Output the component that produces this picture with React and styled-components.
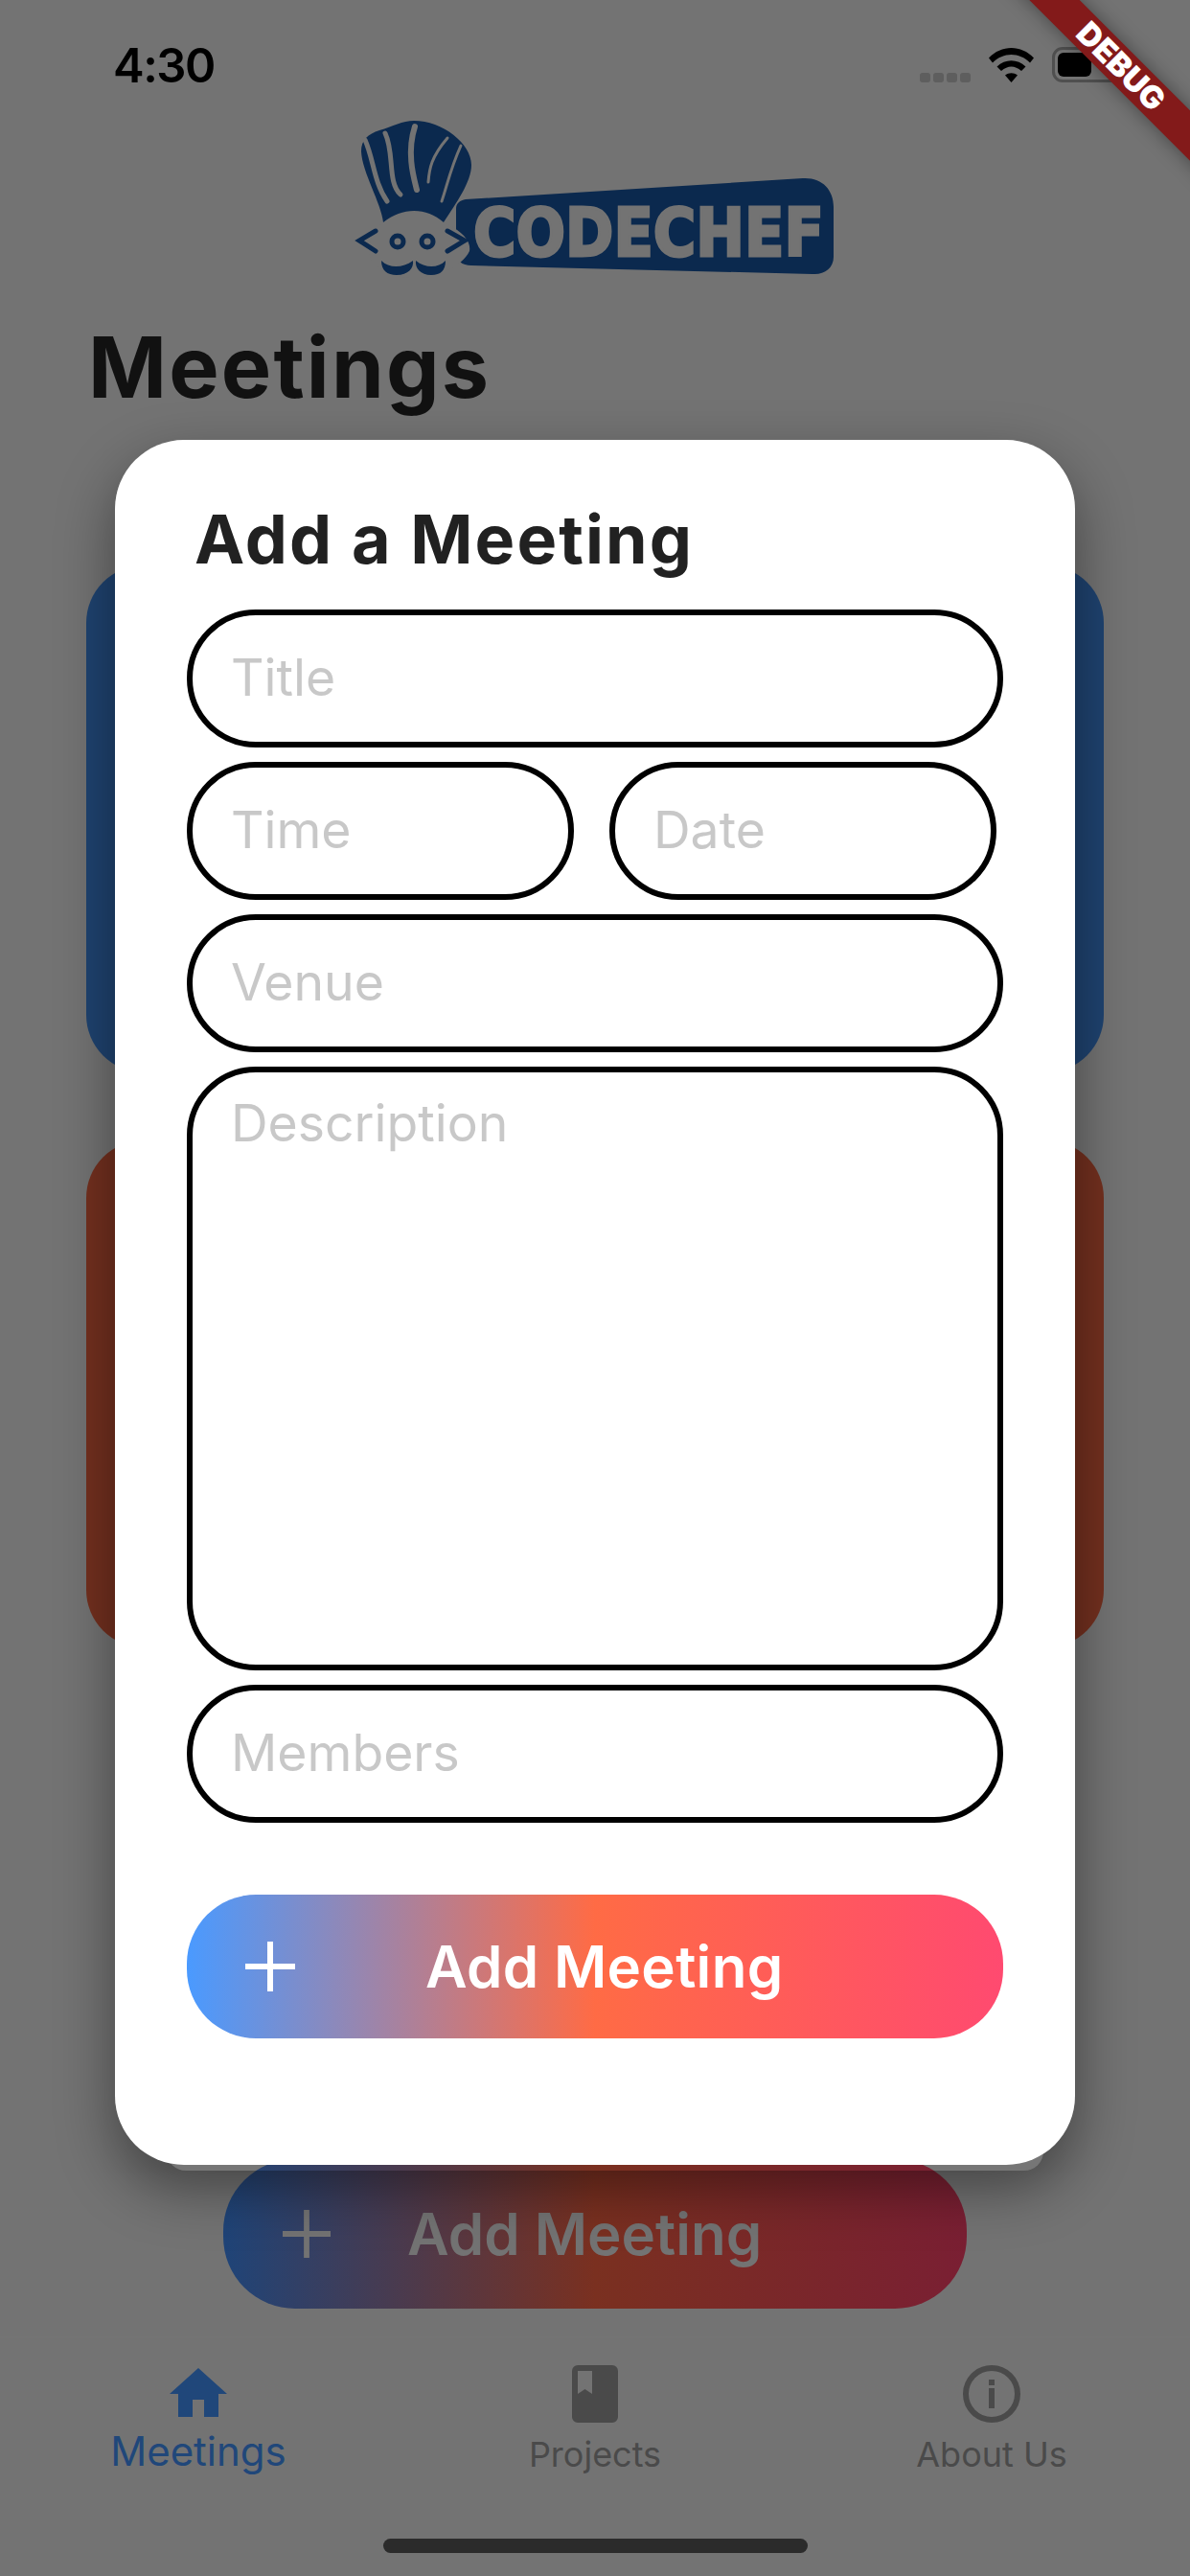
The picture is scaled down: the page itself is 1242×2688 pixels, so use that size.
import React from 'react';
import styled, { createGlobalStyle } from 'styled-components';

const GlobalStyle = createGlobalStyle`
  html, body {
    margin: 0;
    padding: 0;
    background: #737373;
  }
  * {
    box-sizing: border-box;
  }
`;

const FONT = `Inter, "Noto Sans", "Liberation Sans", sans-serif`;
const LOGO_BLUE = '#0b294e';
const BACK_GRADIENT = 'linear-gradient(90deg, #1f4478 0%, #7a3020 50%, #7a1f33 100%)';

const Home = () => (
  <svg width="60" height="51" viewBox="0 0 60 51">
    <path d="M30 0 L60 27 H51 V51 H36 V33 H24 V51 H9 V27 H0 Z" fill="currentColor" />
  </svg>
);

const Book = () => (
  <svg width="48" height="60" viewBox="0 0 48 60">
    <path
      fillRule="evenodd"
      d="M6 0 H42 A6 6 0 0 1 48 6 V54 A6 6 0 0 1 42 60 H6 A6 6 0 0 1 0 54 V6 A6 6 0 0 1 6 0 Z M6 6 V30 L13.500 25 L21 30 V6 Z"
      fill="currentColor"
    />
  </svg>
);

const Info = () => (
  <svg width="60" height="60" viewBox="0 0 60 60">
    <circle cx="30" cy="30" r="27" fill="none" stroke="currentColor" strokeWidth="6" />
    <rect x="27" y="15" width="6" height="6" fill="currentColor" />
    <rect x="27" y="24" width="6" height="21" fill="currentColor" />
  </svg>
);

const Plus = ({ size, color }) => (
  <svg width={size} height={size} viewBox="0 0 52 52">
    <path d="M23 0 H29 V23 H52 V29 H29 V52 H23 V29 H0 V23 H23 Z" fill={color} />
  </svg>
);

const Wifi = () => (
  <svg width="47" height="36" viewBox="0 0 47 36">
    <path d="M0 10.500 C13 -3.500 34 -3.500 47 10.500 L43 15.500 C32 4 15 4 4 15.500 Z" fill="#000" />
    <path d="M8.500 19.500 C17 11 30 11 38.500 19.500 L34 24 C27 18 20 18 13 24 Z" fill="#000" />
    <path d="M17 28.500 C21 25.500 26 25.500 30 28.500 L23.500 36 Z" fill="#000" />
  </svg>
);

// hat, face and banner of the logo; the group is in page pixels, the text in svg pixels
const Logo = () => (
  <svg width="600" height="175" viewBox="0 0 600 175">
    <g transform="translate(-360 -120)">
      <path
        fill={LOGO_BLUE}
        d="M432 126 C462 126 492 150 492 172 C492 190 476 212 463 232 L400 232 C398 212 378 180 377 158 C377 146 384 140 396 136 C410 132 420 126 432 126 Z"
      />
      <g fill="none" stroke="#737373" strokeLinecap="round">
        <path strokeWidth="5" d="M381 146 C390 166 390 190 404 210" />
        <path strokeWidth="5" d="M402 139 C412 160 404 190 418 203" />
        <path strokeWidth="6" d="M433 132 C424 160 432 186 435 198" />
        <path strokeWidth="3" d="M467 144 C450 164 448 176 447 190" />
        <path strokeWidth="3" d="M481 152 C470 176 466 196 461 210" />
      </g>
      <path
        fill={LOGO_BLUE}
        d="M486 208 L838 186 C858 185 870 198 870 216 L870 268 C870 280 860 287 848 286 L492 277 C482 277 476 272 476 262 L476 218 C476 212 480 209 486 208 Z"
      />
    </g>
    <text
      x="134"
      y="147"
      fontFamily="'DejaVu Sans', sans-serif"
      fontWeight="700"
      fontSize="70"
      fill="#737373"
      stroke="#737373"
      strokeWidth="3"
      textLength="366"
      lengthAdjust="spacingAndGlyphs"
    >
      CODECHEF
    </text>
    <g transform="translate(-360 -120)">
      <path
        fill="#737373"
        d="M400 232 C420 216 445 216 463 232 C480 240 492 250 490 262 C482 280 450 290 432 290 C410 290 385 280 385 262 C385 250 390 240 400 232 Z"
      />
      <g fill="none" stroke={LOGO_BLUE} strokeWidth="5" strokeLinecap="round">
        <path d="M392 241 L375 251 L392 262" />
        <path d="M467 241 L485 251 L467 262" />
      </g>
      <circle cx="415" cy="252" r="6" fill="none" stroke={LOGO_BLUE} strokeWidth="5" />
      <circle cx="446" cy="252" r="6" fill="none" stroke={LOGO_BLUE} strokeWidth="5" />
      <path fill={LOGO_BLUE} d="M398 272 C406 280 420 280 431 272 C432 280 426 287 414 287 C404 287 398 282 398 272 Z" />
      <path fill={LOGO_BLUE} d="M465 272 C457 280 444 280 434 272 C433 280 439 287 450 287 C460 287 465 282 465 272 Z" />
    </g>
  </svg>
);

const Page = styled.div`
  position: relative;
  width: 1242px;
  height: 2688px;
  overflow: hidden;
  background: #737373;
  font-family: ${FONT};
  display: flex;
  flex-direction: column;
`;

const StatusBar = styled.div`
  height: 120px;
  padding: 47px 72px 0 118px;
  display: flex;
  justify-content: space-between;
  align-items: flex-start;
`;

const Clock = styled.span`
  font-size: 49px;
  line-height: 44px;
  font-weight: 600;
  letter-spacing: -1.5px;
  color: #000;
`;

const StatusIcons = styled.div`
  display: flex;
  align-items: flex-end;
  gap: 19px;
  padding-top: 2px;
`;

const SignalDots = styled.div`
  display: flex;
  gap: 3px;
`;

const Dot = styled.i`
  display: block;
  width: 11px;
  height: 10px;
  border-radius: 3px;
  background: #5e5e5e;
`;

const Battery = styled.div`
  width: 72px;
  height: 37px;
  border: 3px solid #4f4f4f;
  border-radius: 11px;
  padding: 3px;
  display: flex;
`;

const BatteryFill = styled.div`
  width: 35px;
  height: 100%;
  border-radius: 6px;
  background: #000;
`;

const LogoRow = styled.div`
  display: flex;
  padding-left: 360px;
  height: 175px;
`;

const Heading = styled.h1`
  margin: 38px 0 0 92px;
  font-size: 88px;
  line-height: 100px;
  font-weight: 700;
  letter-spacing: 2.2px;
  color: #111;
`;

const Cards = styled.div`
  margin: 157px 90px 0;
  display: flex;
  flex-direction: column;
  gap: 71px;
`;

const Card = styled.div`
  height: 529px;
  border-radius: 60px;
  background: ${(p) => p.$color};
`;

const BackButton = styled.div`
  margin: 534px auto 0;
  width: 776px;
  height: 156px;
  border-radius: 75px;
  background: ${BACK_GRADIENT};
  display: flex;
  align-items: center;
  padding-left: 62px;
  gap: 80px;
  color: #737373;
  font-size: 60px;
  font-weight: 600;
`;

const TabBar = styled.div`
  position: absolute;
  left: 0;
  right: 0;
  bottom: 0;
  height: 250px;
  padding-top: 29px;
  display: grid;
  grid-template-columns: repeat(3, 1fr);
  border-top: 1px solid #757575;
`;

const Tab = styled.div`
  display: flex;
  flex-direction: column;
  align-items: center;
  color: ${(p) => (p.$active ? '#20477a' : '#4a4a4a')};
`;

const TabIcon = styled.div`
  height: 60px;
  padding-top: ${(p) => (p.$active ? '3px' : '0')};
  display: flex;
  align-items: flex-start;
`;

const TabLabel = styled.span`
  font-size: ${(p) => (p.$active ? '42px' : '36px')};
  line-height: 50px;
  margin-top: ${(p) => (p.$active ? '5px' : '8px')};
`;

const HomeIndicator = styled.div`
  position: absolute;
  left: 400px;
  bottom: 24px;
  width: 443px;
  height: 15px;
  border-radius: 8px;
  background: #2b2b2b;
`;

const ModalShadow = styled.div`
  position: absolute;
  left: 120px;
  top: 459px;
  width: 1002px;
  height: 1800px;
  border-radius: 72px;
  box-shadow: 0 24px 60px rgba(0, 0, 0, 0.42);
`;

const BackSheet = styled.div`
  position: absolute;
  left: 174px;
  top: 2160px;
  width: 915px;
  height: 105px;
  border-radius: 20px;
  background: #767676;
  overflow: hidden;
`;

const SheetButton = styled.div`
  position: absolute;
  left: 59px;
  top: 93px;
  width: 776px;
  height: 156px;
  border-radius: 75px;
  background: ${BACK_GRADIENT};
`;

const Modal = styled.div`
  position: absolute;
  left: 120px;
  top: 459px;
  width: 1002px;
  height: 1800px;
  border-radius: 72px;
  background: #fff;
  padding: 60px 75px 0;
  display: flex;
  flex-direction: column;
`;

const ModalTitle = styled.h2`
  margin: 0 0 30px 8px;
  font-size: 70px;
  line-height: 87px;
  font-weight: 700;
  letter-spacing: 2.1px;
  color: #212121;
`;

const Field = styled.div`
  width: ${(p) => p.$width || '100%'};
  height: ${(p) => p.$height || '144px'};
  border: 6px solid #000;
  border-radius: 72px;
  padding: ${(p) => (p.$tall ? '20px' : '0')} 40px ${(p) => (p.$tall ? '0' : '3px')};
  display: flex;
  align-items: ${(p) => (p.$tall ? 'flex-start' : 'center')};
  font-size: 53.500px;
  color: #c8c8c8;
  margin-bottom: 15px;
`;

const FieldRow = styled.div`
  display: flex;
  gap: 37px;
`;

const SubmitButton = styled.div`
  margin-top: 60px;
  height: 150px;
  border-radius: 72px;
  background: linear-gradient(90deg, #4a9aff 0%, #ff6b45 50%, #ff4a70 100%);
  display: flex;
  align-items: center;
  padding-left: 61px;
  color: #fff;
  font-size: 60px;
  font-weight: 600;
  letter-spacing: 0.3px;
`;

const SubmitLabel = styled.span`
  margin-left: 136px;
`;

const BannerClip = styled.div`
  position: absolute;
  top: 0;
  right: 0;
  width: 260px;
  height: 200px;
  overflow: hidden;
  pointer-events: none;
`;

const Banner = styled.div`
  position: absolute;
  left: 38px;
  top: 51px;
  width: 300px;
  height: 37px;
  background: #831a1a;
  box-shadow: 0 0 20px rgba(0, 0, 0, 0.4);
  transform: rotate(45deg);
  color: #fff;
  font-family: ${FONT};
  font-weight: 900;
  font-size: 33px;
  line-height: 37px;
  text-align: center;
`;

const App = () => (
  <Page>
    <GlobalStyle />
    <StatusBar>
      <Clock>4:30</Clock>
      <StatusIcons>
        <SignalDots>
          {[0, 1, 2, 3].map((i) => (
            <Dot key={i} />
          ))}
        </SignalDots>
        <Wifi />
        <Battery>
          <BatteryFill />
        </Battery>
      </StatusIcons>
    </StatusBar>
    <LogoRow>
      <Logo />
    </LogoRow>
    <Heading>Meetings</Heading>
    <Cards>
      <Card $color="#1f4370" />
      <Card $color="#73301f" />
    </Cards>
    <BackButton>
      <Plus size={50} color="#737373" />
      <span>Add Meeting</span>
    </BackButton>
    <TabBar>
      <Tab $active>
        <TabIcon $active>
          <Home />
        </TabIcon>
        <TabLabel $active>Meetings</TabLabel>
      </Tab>
      <Tab>
        <TabIcon>
          <Book />
        </TabIcon>
        <TabLabel>Projects</TabLabel>
      </Tab>
      <Tab>
        <TabIcon>
          <Info />
        </TabIcon>
        <TabLabel>About Us</TabLabel>
      </Tab>
    </TabBar>
    <HomeIndicator />
    <ModalShadow />
    <BackSheet>
      <SheetButton />
    </BackSheet>
    <Modal>
      <ModalTitle>Add a Meeting</ModalTitle>
      <Field>Title</Field>
      <FieldRow>
        <Field $width="404px">Time</Field>
        <Field $width="404px">Date</Field>
      </FieldRow>
      <Field>Venue</Field>
      <Field $height="630px" $tall>
        Description
      </Field>
      <Field>Members</Field>
      <SubmitButton>
        <Plus size={52} color="#fff" />
        <SubmitLabel>Add Meeting</SubmitLabel>
      </SubmitButton>
    </Modal>
    <BannerClip>
      <Banner>DEBUG</Banner>
    </BannerClip>
  </Page>
);

export default App;
